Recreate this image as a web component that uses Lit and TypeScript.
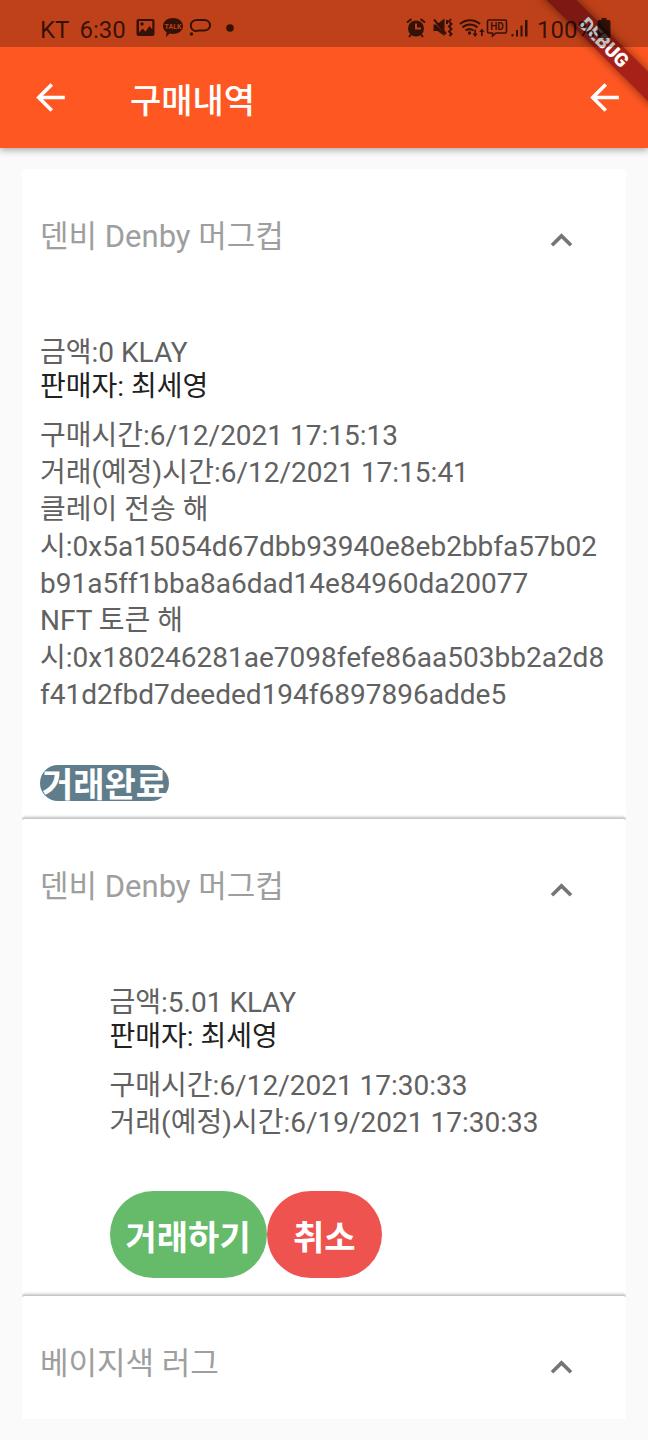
import { LitElement, html, css, svg, nothing } from "lit";
import { customElement, property } from "lit/decorators.js";

interface Purchase {
  title: string;
  price?: string;
  seller?: string;
  lines?: string[];
  state?: "done" | "pending";
}

const purchases: Purchase[] = [
  {
    title: "덴비 Denby 머그컵",
    price: "금액:0 KLAY",
    seller: "판매자: 최세영",
    lines: [
      "구매시간:6/12/2021 17:15:13",
      "거래(예정)시간:6/12/2021 17:15:41",
      "클레이 전송 해시:0x5a15054d67dbb93940e8eb2bbfa57b02b91a5ff1bba8a6dad14e84960da20077",
      "NFT 토큰 해시:0x180246281ae7098fefe86aa503bb2a2d8f41d2fbd7deeded194f6897896adde5",
    ],
    state: "done",
  },
  {
    title: "덴비 Denby 머그컵",
    price: "금액:5.01 KLAY",
    seller: "판매자: 최세영",
    lines: ["구매시간:6/12/2021 17:30:33", "거래(예정)시간:6/19/2021 17:30:33"],
    state: "pending",
  },
  { title: "베이지색 러그" },
];

const arrowPath = svg`<path d="M20 11H7.830l5.590-5.590L12 4l-8 8 8 8 1.410-1.410L7.830 13H20v-2z"/>`;

@customElement("status-bar")
class StatusBar extends LitElement {
  static styles = css`
    :host {
      display: flex;
      align-items: center;
      height: 47px;
      box-sizing: border-box;
      padding: 11px 37px 0 40px;
      background: rgba(0, 0, 0, 0.25);
      color: rgba(0, 0, 0, 0.72);
      font-size: 24px;
      line-height: 32px;
    }
    .left,
    .right,
    .level {
      display: flex;
      align-items: center;
    }
    .left {
      gap: 10px;
    }
    .right {
      margin-left: auto;
      gap: 7px;
    }
    .level {
      gap: 2px;
    }
    .text {
      padding-top: 2px;
    }
    .icon {
      display: block;
      margin-bottom: 2px;
    }
  `;
  render() {
    return html`
      <div class="left">
        <span class="text">KT</span>
        <span class="text">6:30</span>
        <svg class="icon" width="100" height="22" viewBox="0 0 100 22" fill="currentColor" aria-hidden="true">
          <path fill-rule="evenodd" d="M2 2h14.500a2 2 0 0 1 2 2v13a2 2 0 0 1-2 2H2.500a2 2 0 0 1-2-2V4a2 2 0 0 1 1.500-2zM3 4v11.500l3.500-4 3 3 4-5.500 2.800 3.500V4z"/>
          <circle cx="6" cy="7" r="1.700"/>
          <path d="M37 1c5.600 0 10 3.500 10 8s-4.400 8-10 8c-1.200 0-2.300-.1-3.400-.4L30 20l.6-4.800c-2.200-1.500-3.600-3.700-3.600-6.200 0-4.500 4.400-8 10-8z"/>
          <text x="37" y="12" font-size="7" font-weight="700" text-anchor="middle" fill="#bf411b">TALK</text>
          <path fill="none" stroke="currentColor" stroke-width="2" d="M61 3h7c3.500 0 6 2.200 6 5.300s-2.500 5.200-6 5.200h-5c-1.800 0-2.300.6-3 .6-3-.3-5.200-2.600-5.200-5.600C54.800 5.300 57.300 3 61 3z"/>
          <circle cx="55.500" cy="17" r="1.700"/>
          <circle cx="94" cy="11" r="3.800"/>
        </svg>
      </div>
      <div class="right">
        <svg class="icon" width="124" height="22" viewBox="0 0 124 22" fill="currentColor" aria-hidden="true">
          <path fill-rule="evenodd" d="M10 3.500a8 8 0 1 1 0 16 8 8 0 0 1 0-16zM9 6.500v6h6v-2h-4v-4z"/>
          <path fill="none" stroke="currentColor" stroke-width="2" d="M1 5.500L5.500 2M14.500 2L19 5.500M5 17.500L3 20M15 17.500l2 2.500"/>
          <path fill-rule="evenodd" d="M27.500 7.500h2.500l8.500 9V19l-7-5h-4zM32 6.500l6.500-5v12z"/>
          <path fill="none" stroke="currentColor" stroke-width="2" d="M28 2.500l12 14.500M41 3v4M45 2l-2 2.500 2.500 2.500-2.500 2.500 2.500 2.500-2.500 2.500 2.500 2.500-2 2"/>
          <g fill="none" stroke="currentColor" stroke-width="2"><path d="M54 7a15 15 0 0 1 20 0M56.500 10.500a11 11 0 0 1 15 0M59.500 13.500a7 7 0 0 1 8 0"/></g>
          <circle cx="63.500" cy="16" r="1.700"/>
          <path d="M70 12.500v4h1.800L69.200 20l-2.700-3.500h1.800v-4zM75 19v-4h-1.800L75.900 11.500l2.600 3.500h-1.800v4z"/>
          <path fill="none" stroke="currentColor" stroke-width="1.600" d="M83 3h16a1.500 1.500 0 0 1 1.500 1.500v10A1.500 1.500 0 0 1 99 16h-9l-3.500 3v-3H83a1.500 1.500 0 0 1-1.500-1.500v-10A1.500 1.500 0 0 1 83 3z"/>
          <text x="91" y="13.200" font-size="10" font-weight="700" text-anchor="middle">HD</text>
          <path d="M105.500 17h2v2.500h-2zM110 13h2v6.500h-2zM114.500 8.500h2v11h-2zM119 3h2.500v16.500h-2.500z"/>
        </svg>
        <span class="level">
          <span class="text">100%</span>
          <svg class="icon" width="14" height="20" viewBox="0 0 14 20" fill="currentColor" aria-hidden="true"><path d="M4.500 0h5v2H12a1.500 1.500 0 0 1 1.500 1.500v15A1.500 1.500 0 0 1 12 20H2A1.500 1.500 0 0 1 .5 18.500v-15A1.500 1.500 0 0 1 2 2h2.500z"/></svg>
        </span>
      </div>
    `;
  }
}

@customElement("purchase-item")
class PurchaseItem extends LitElement {
  @property({ attribute: false }) item!: Purchase;
  static styles = css`
    :host {
      display: block;
      background: #fff;
      border-radius: 3px 3px 0 0;
    }
    .head {
      display: flex;
      align-items: flex-start;
      justify-content: space-between;
      padding: 50px 43px 30px 18px;
    }
    .title {
      margin: 0;
      font-size: 31px;
      line-height: 36px;
      font-weight: 400;
      color: #9e9e9e;
    }
    button {
      border: 0;
      margin: 0;
      padding: 0;
      background: none;
      font: inherit;
      color: inherit;
      cursor: pointer;
    }
    .toggle {
      color: #757575;
    }
    .toggle svg {
      display: block;
    }
    .body {
      width: fit-content;
      box-sizing: border-box;
      margin: 0 auto;
      padding: 44px 18px 17px;
      font-size: 28px;
      color: #616161;
    }
    p {
      margin: 0;
    }
    .pair {
      line-height: 34px;
    }
    .seller {
      color: #212121;
    }
    .lines {
      margin-top: 13px;
      line-height: 37px;
      overflow-wrap: anywhere;
    }
    .badge {
      display: block;
      width: fit-content;
      height: 36px;
      box-sizing: border-box;
      margin-top: 52px;
      padding: 0 2px;
      border-radius: 18px;
      background: #607d8b;
      color: #fff;
      font-size: 34px;
      line-height: 40px;
      font-weight: 700;
    }
    .actions {
      display: flex;
      margin-top: 50px;
    }
    .pill {
      min-width: 115px;
      height: 87px;
      padding: 2px 16px 0;
      border-radius: 44px;
      color: #fff;
      font-size: 34px;
      font-weight: 700;
    }
    .accept {
      background: #66bb6a;
    }
    .cancel {
      background: #ef5350;
    }
  `;
  render() {
    const { title, price, seller, lines, state } = this.item;
    return html`
      <div class="head">
        <h2 class="title">${title}</h2>
        <button class="toggle" aria-label="접기">
          <svg width="43" height="43" viewBox="0 0 24 24" fill="currentColor" aria-hidden="true"><path d="M12 8l-6 6 1.410 1.410L12 10.830l4.590 4.580L18 14z"/></svg>
        </button>
      </div>
      ${lines
        ? html`<div class="body">
            <div class="pair">
              <p>${price}</p>
              <p class="seller">${seller}</p>
            </div>
            <div class="lines">${lines.map((l) => html`<p>${l}</p>`)}</div>
            ${state === "done"
              ? html`<span class="badge">거래완료</span>`
              : html`<div class="actions">
                  <button class="pill accept">거래하기</button>
                  <button class="pill cancel">취소</button>
                </div>`}
          </div>`
        : nothing}
    `;
  }
}

@customElement("app-root")
class AppRoot extends LitElement {
  static styles = css`
    :host {
      display: block;
      min-height: 100vh;
      background: #fafafa;
      font-family: Roboto, "Noto Sans CJK KR", sans-serif;
    }
    .top {
      position: relative;
      background: #ff5722;
      color: #fff;
      box-shadow: 0 2px 7px rgba(0, 0, 0, 0.35);
    }
    .status {
      position: relative;
      z-index: 2;
    }
    .bar {
      display: flex;
      align-items: center;
      height: 101px;
      padding: 0 22px 0 29px;
    }
    .back {
      border: 0;
      margin: 0;
      padding: 0;
      background: none;
      color: inherit;
      cursor: pointer;
    }
    .back svg {
      display: block;
    }
    h1 {
      flex: 1;
      margin: 0;
      padding: 6px 0 0 58px;
      font-size: 34px;
      line-height: 44px;
      font-weight: 500;
    }
    .corner {
      position: absolute;
      top: 0;
      right: 0;
      width: 120px;
      height: 120px;
      overflow: hidden;
      pointer-events: none;
    }
    .ribbon {
      position: absolute;
      left: -4px;
      top: 32px;
      width: 160px;
      height: 21px;
      transform: rotate(45deg);
      background: #a82119;
      box-shadow: 0 0 10px rgba(0, 0, 0, 0.5);
      font-size: 19px;
      line-height: 21px;
      font-weight: 900;
      text-align: center;
    }
    main {
      padding: 21px 22px 22px;
    }
    .list {
      overflow: hidden;
    }
    .item + .item {
      border-top: 1px solid #c6c6c6;
      box-shadow: 0 -1px 3px rgba(0, 0, 0, 0.25);
    }
  `;
  render() {
    return html`
      <header class="top">
        <status-bar class="status"></status-bar>
        <div class="bar">
          <button class="back" aria-label="뒤로">
            <svg width="43" height="43" viewBox="0 0 24 24" fill="currentColor" aria-hidden="true">${arrowPath}</svg>
          </button>
          <h1>구매내역</h1>
          <button class="back" aria-label="이전">
            <svg width="43" height="43" viewBox="0 0 24 24" fill="currentColor" aria-hidden="true">${arrowPath}</svg>
          </button>
        </div>
        <div class="corner"><div class="ribbon">DEBUG</div></div>
      </header>
      <main>
        <div class="list">
          ${purchases.map((p) => html`<purchase-item class="item" .item=${p}></purchase-item>`)}
        </div>
      </main>
    `;
  }
}
